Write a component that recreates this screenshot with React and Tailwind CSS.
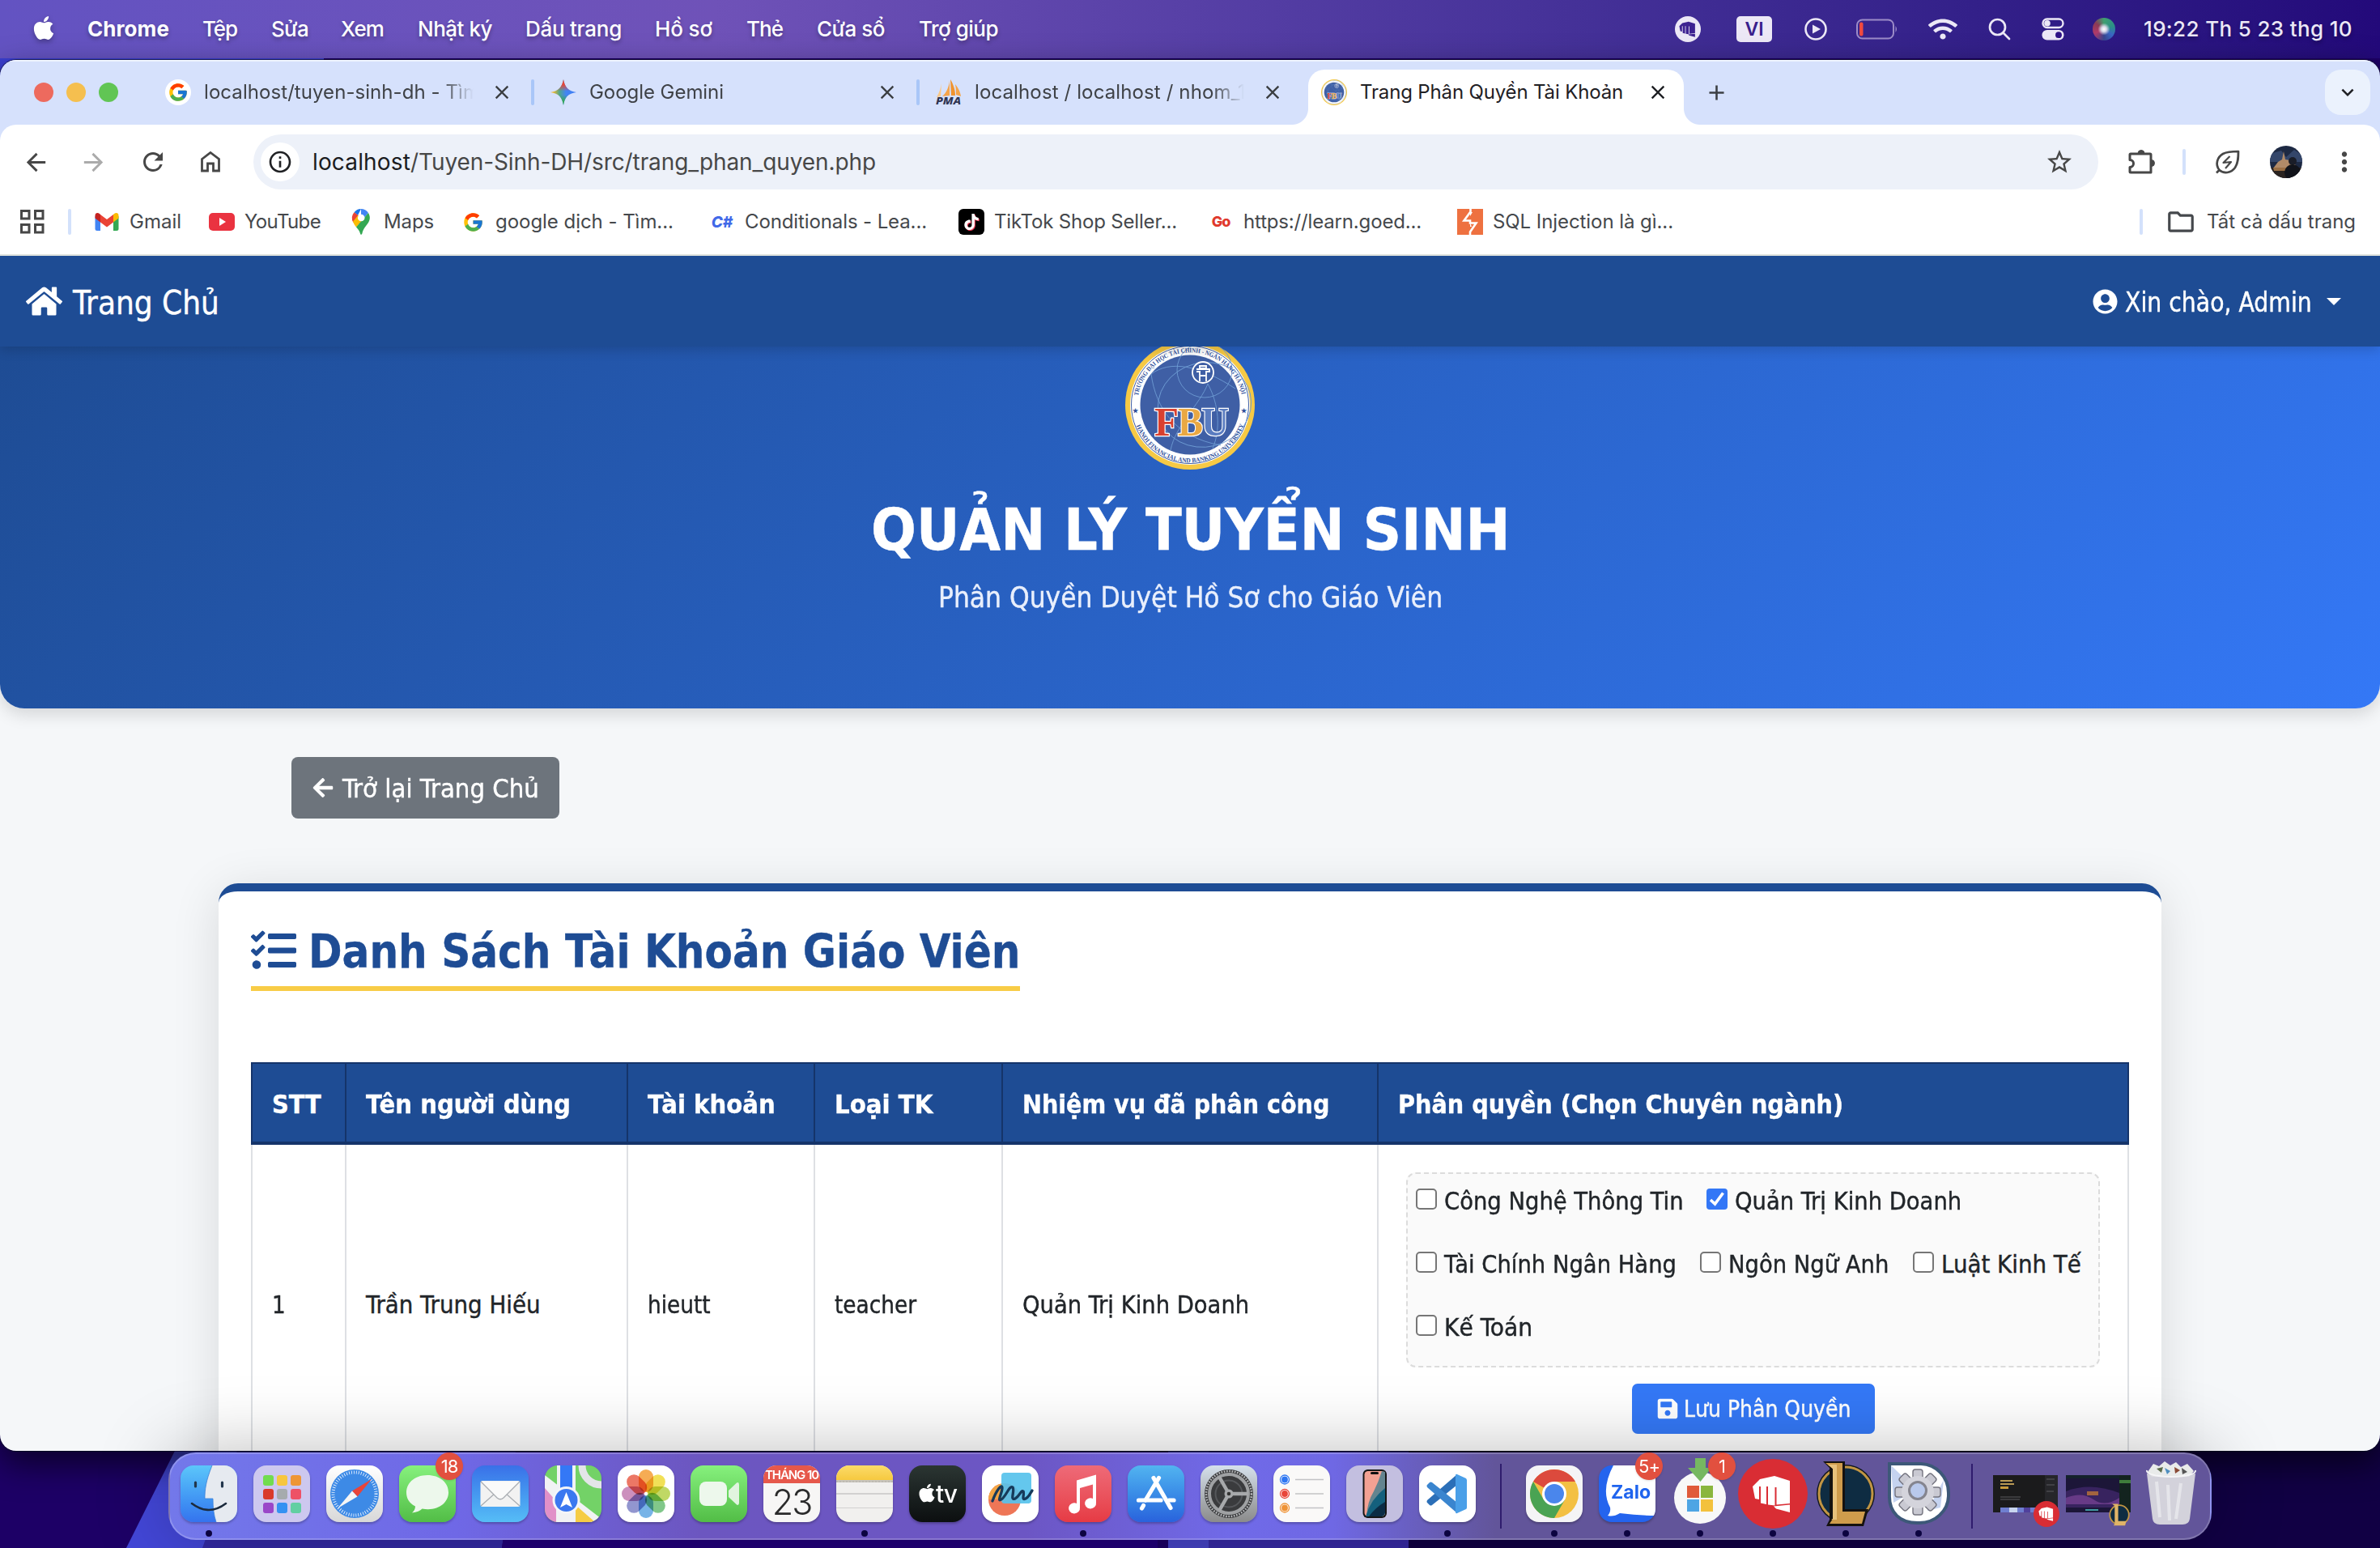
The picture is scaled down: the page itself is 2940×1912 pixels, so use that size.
import React, { useLayoutEffect, useRef } from "react";
import { FaApple, FaHome, FaUserCircle, FaArrowLeft, FaTasks, FaSave, FaWifi } from "react-icons/fa";
import { FcGoogle } from "react-icons/fc";
import { MdArrowBack, MdArrowForward, MdRefresh, MdInfoOutline, MdStarBorder, MdMoreVert, MdOutlineFolder, MdClose, MdAdd, MdKeyboardArrowDown } from "react-icons/md";
import { SiTiktok } from "react-icons/si";

const UI = "font-['Inter','Noto_Sans',sans-serif]";
const WEB = "font-['DejaVu_Sans_Condensed','DejaVu_Sans','Noto_Sans',sans-serif] [font-stretch:condensed]";

/* Single line of text whose tracking is adjusted so it spans exactly w pixels. */
function Fit({ w, children, className = "" }) {
  const ref = useRef(null);
  useLayoutEffect(() => {
    const el = ref.current;
    el.style.letterSpacing = "0px";
    const natural = el.getBoundingClientRect().width;
    el.style.letterSpacing = `${(w - natural) / children.length}px`;
  }, [w, children]);
  return (
    <span ref={ref} className={`inline-block shrink-0 whitespace-nowrap leading-none ${className}`}>
      {children}
    </span>
  );
}

/* Single line of text whose glyphs are widened or narrowed to span exactly w pixels. */
function Stretch({ w, children }) {
  const outer = useRef(null);
  const inner = useRef(null);
  useLayoutEffect(() => {
    outer.current.style.width = `${w}px`;
    inner.current.style.transform = `scaleX(${w / inner.current.offsetWidth})`;
  }, [w, children]);
  return (
    <span ref={outer} className="inline-flex shrink-0 leading-none">
      <span ref={inner} className="inline-block origin-left shrink-0 whitespace-nowrap leading-none [-webkit-text-stroke:0.4px]">{children}</span>
    </span>
  );
}

/* ---------- small drawings ---------- */

function Fist({ className }) {
  return (
    <svg viewBox="-26 -26 52 52" className={className} fill="currentColor">
      <path d="M-25 -9 L-16 -18 L2 -22 L21 -16 V12 L4.500 13.500 V-8 H2.500 V14.500 L-6 13.500 V-9 H-8 V13 L-15 11.500 V-9 H-17 V7 L-22 6 Z" />
      <path d="M1 15.500 L21 13.500 V23 L4 18.500 Z" />
    </svg>
  );
}

function FbuLogo({ className, detailed = false }) {
  return (
    <svg viewBox="0 0 160 160" className={className}>
      <circle cx="80" cy="80" r="80" fill="#f6c945" />
      <circle cx="80" cy="80" r="74" fill="#fff" />
      <circle cx="80" cy="80" r="72.5" fill="none" stroke="#3f5fa5" strokeWidth="1" />
      <circle cx="80" cy="80" r="61.5" fill="#3f5fa5" />
      <g fill="none" stroke="#6d9bd2" strokeWidth="0.9">
        <ellipse cx="98" cy="37" rx="34" ry="34" />
        <ellipse cx="98" cy="80" rx="58" ry="52" transform="rotate(-14 98 80)" />
        <path d="M32 42 C38 85 62 120 118 130" />
        <path d="M102 54 C92 80 62 105 56 136" />
        <path d="M102 54 C116 80 118 110 108 134" />
        <path d="M32 42 C55 25 90 30 136 60" />
      </g>
      <circle cx="96" cy="40" r="13" fill="#3f5fa5" stroke="#fff" strokeWidth="1.800" />
      <path d="M88 36 H104 V39 H100 V51 M92 51 V39 H88 M92 32 H100 V35 H92 Z M93 44 H99" fill="none" stroke="#fff" strokeWidth="1.800" />
      <g fontFamily="'Liberation Serif', serif" fontWeight="700" fontSize="51" stroke="#fff" strokeWidth="2.400" paintOrder="stroke">
        <text x="36" y="118" fill="#d8402f" textLength="30" lengthAdjust="spacingAndGlyphs">F</text>
        <text x="65" y="118" fill="#eaa843" textLength="31" lengthAdjust="spacingAndGlyphs">B</text>
        <text x="94" y="118" fill="#5a7cc0" textLength="34" lengthAdjust="spacingAndGlyphs">U</text>
      </g>
      {detailed && (
        <g fontFamily="'Liberation Serif', serif" fontWeight="700" fontSize="8" fill="#2f4f9a">
          <path id="fbu-top" d="M15.800 70 A65 65 0 0 1 144.200 70" fill="none" />
          <path id="fbu-bottom" d="M11.500 99 A71 71 0 0 0 148.500 99" fill="none" />
          <text textLength="180" lengthAdjust="spacingAndGlyphs"><textPath href="#fbu-top" startOffset="1">TRƯỜNG ĐẠI HỌC TÀI CHÍNH - NGÂN HÀNG HÀ NỘI</textPath></text>
          <text textLength="172" lengthAdjust="spacingAndGlyphs"><textPath href="#fbu-bottom" startOffset="7">HANOI FINANCIAL AND BANKING UNIVERSITY</textPath></text>
          <text x="9" y="90">★</text>
          <text x="143" y="90">★</text>
        </g>
      )}
    </svg>
  );
}

function GeminiIcon() {
  return (
    <svg viewBox="0 0 32 32" className="size-8">
      <defs>
        <linearGradient id="gem" x1="0" y1="0.5" x2="1" y2="0.5"><stop offset="0.1" stopColor="#f5b82a" /><stop offset="0.35" stopColor="#4fa58f" /><stop offset="0.6" stopColor="#4285f4" /><stop offset="1" stopColor="#3f7cf4" /></linearGradient>
        <linearGradient id="gem2" x1="0" y1="0" x2="0" y2="1"><stop offset="0" stopColor="#ea4335" /><stop offset="0.2" stopColor="#ea4335" /><stop offset="0.45" stopColor="#ea4335" stopOpacity="0" /><stop offset="0.6" stopColor="#34a853" stopOpacity="0" /><stop offset="0.85" stopColor="#34a853" /></linearGradient>
      </defs>
      <path d="M16 0 C17.500 9.500 22 14.500 32 16 C22 17.500 17.500 22 16 32 C14.500 22 10 17.500 0 16 C10 14.500 14.500 9.500 16 0Z" fill="url(#gem)" />
      <path d="M16 0 C17.500 9.500 22 14.500 32 16 C22 17.500 17.500 22 16 32 C14.500 22 10 17.500 0 16 C10 14.500 14.500 9.500 16 0Z" fill="url(#gem2)" />
    </svg>
  );
}

function PmaIcon() {
  return (
    <svg viewBox="0 0 32 32" className="size-8">
      <path d="M7 5 L6 21 L1 22 C4 17 6 11 7 5Z" fill="#f9c98a" />
      <path d="M17 0 C17 8 13 17 8 21 L17 20Z" fill="#f5a44a" />
      <path d="M18 0 L19 20 L24 20 C24 12 21 5 18 0Z" fill="#f0932f" />
      <path d="M24 6 C25 11 25 16 25 19 L31 21 C30 14 27 10 24 6Z" fill="#f5a44a" />
      <text x="0" y="31" fontFamily="'Noto Sans',sans-serif" fontStyle="italic" fontWeight="800" fontSize="11.500" fill="#2f3350" textLength="31" lengthAdjust="spacingAndGlyphs">PMA</text>
    </svg>
  );
}

function GmailIcon() {
  return (
    <svg viewBox="0 0 32 32" className="size-8">
      <path d="M1.500 9 V24.500 Q1.500 27 4 27 H8 V13Z" fill="#4285f4" />
      <path d="M24 13 V27 H28 Q30.500 27 30.500 24.500 V9Z" fill="#34a853" />
      <path d="M8 7 V16.500 L16 22.500 L24 16.500 V7 L16 13Z" fill="#ea4335" />
      <path d="M24 7 V16.500 L30.500 11.500 V8 C30.500 4.500 27 4.200 25 6Z" fill="#fbbc04" />
      <path d="M8 7 V16.500 L1.500 11.500 V8 C1.500 4.500 5 4.200 7 6Z" fill="#c5221f" />
    </svg>
  );
}

function YoutubeIcon() {
  return (
    <svg viewBox="0 0 32 32" className="size-8">
      <rect y="5" width="32" height="22" rx="5" fill="#ea3340" />
      <path d="M13 11 L21 16 L13 21Z" fill="#fff" />
    </svg>
  );
}

function MapsPin() {
  return (
    <svg viewBox="0 0 32 32" className="size-8">
      <path d="M16 0 A11 11 0 0 0 7.500 4.200 L12 8Z" fill="#1a73e8" />
      <path d="M7.500 4.200 A11 11 0 0 0 6.500 17 L12.500 8Z" fill="#ea4335" />
      <path d="M16 0 C19.500 0 23 1.500 25 5 L13 19 L7.500 18.500 L16 8Z" fill="#4285f4" />
      <path d="M6 15.500 L12.500 8 L18 14 L10 22.500 C8.500 20.500 7 18.500 6 15.500Z" fill="#fbbc04" />
      <path d="M25 5 C27.500 9 27.300 13.500 25 17 C21 22.500 18.500 25 17.500 30 C17 32 15.500 32.500 15 30.500 C14 26.500 12 25 10 22.500Z" fill="#34a853" />
      <circle cx="16.200" cy="11" r="4.300" fill="#fff" />
    </svg>
  );
}

function SqlIcon() {
  return (
    <svg viewBox="0 0 32 32" className="size-8">
      <rect width="32" height="32" fill="#ee7140" />
      <path d="M16.500 0 V3.500 L8.500 14.500 H16 V17.500 H23.500 L16 28.500 V32" fill="none" stroke="#fff" strokeWidth="2.600" />
      <path d="M16 4 L19 4 L16 9Z M16 17 V22 L18 22Z" fill="#fff" />
    </svg>
  );
}

function HomeOutline() {
  return (
    <svg viewBox="0 0 32 32" className="size-8" fill="none" stroke="#474747" strokeWidth="2.800">
      <path d="M5.500 12.500 L16 4.500 L26.500 12.500 V27 H19.500 V18 H12.500 V27 H5.500Z" />
    </svg>
  );
}

function ExtensionOutline() {
  return (
    <svg viewBox="0 0 36 36" className="size-9" fill="none" stroke="#474747" strokeWidth="3" strokeLinejoin="round">
      <path d="M5 8 H29 Q30 8 30 9 V31 H5 Q4 31 4 30 V24.500 C10 24.500 10 15.500 4 15.500 V9 Q4 8 5 8Z" />
      <path d="M14 7.500 A4 4 0 0 1 22 7.500Z M30.500 15.500 A4 4 0 0 1 30.500 23.500Z" fill="#474747" strokeWidth="1" />
    </svg>
  );
}

function LeafBolt() {
  return (
    <svg viewBox="0 0 32 32" className="size-8" fill="none" stroke="#474747" strokeWidth="2.700" strokeLinejoin="round">
      <path d="M5.500 26 C0 19 3 10 10 6 C16 3 23 3 29 3 C29 10 29 17 25 23 C20 30 11 31 5.500 26 L2 29.500" />
      <path d="M18.500 9 L10.500 17 L20 16 L13 24" strokeWidth="2.200" />
    </svg>
  );
}

function Avatar() {
  return (
    <svg viewBox="0 0 40 40" className="size-10">
      <clipPath id="av"><circle cx="20" cy="20" r="20" /></clipPath>
      <g clipPath="url(#av)">
        <rect width="40" height="40" fill="#1d2943" />
        <path d="M0 10 L14 6 L20 14 L30 5 L40 12 V20 H0Z" fill="#34466a" />
        <path d="M4 28 L10 20 L15 17 L17 7 L19 17 L25 18 L32 24 L33 30 L4 33Z" fill="#b08a68" />
        <rect x="0" y="27" width="40" height="13" fill="#2a2320" />
        <path d="M4 27 H26 V31 H5Z" fill="#9a6f45" />
        <circle cx="28" cy="19" r="5" fill="#1a1d28" />
        <circle cx="28" cy="33" r="10" fill="#11131a" />
      </g>
    </svg>
  );
}

/* ---------- menu bar ---------- */

const MENU = [
  ["Tệp", 43, "ml-[41px]"],
  ["Sửa", 46, "ml-[42px]"],
  ["Xem", 53, "ml-[40px]"],
  ["Nhật ký", 92, "ml-[42px]"],
  ["Dấu trang", 119, "ml-[41px]"],
  ["Hồ sơ", 71, "ml-[41px]"],
  ["Thẻ", 45, "ml-[42px]"],
  ["Cửa sổ", 84, "ml-[42px]"],
  ["Trợ giúp", 98, "ml-[42px]"],
];

function MenuBar() {
  return (
    <div className={`flex h-[72px] w-full items-center bg-linear-to-r from-[#6353c2] via-[#6f52b8] via-30% to-[#23097a] pl-[40px] pr-[34px] text-[26px] font-medium text-white [text-shadow:0_3px_5px_rgba(0,0,0,0.3)] ${UI}`}>
      <div className="flex w-full items-center">
        <FaApple className="mr-[40px] -mt-[3px] h-[33px] w-[28px] drop-shadow-[0_3px_3px_rgba(0,0,0,0.3)]" />
        <Fit w={101} className="font-bold">Chrome</Fit>
        {MENU.map(([t, w, m]) => (
          <div key={t} className={`flex ${m}`}><Fit w={w}>{t}</Fit></div>
        ))}
        <div className="ml-auto flex items-center text-[#ece8f6]">
          <div className="flex size-8 items-center justify-center rounded-full bg-[#ece8f6] text-[#3d2291]"><Fist className="size-[22px]" /></div>
          <div className="ml-[44px] flex h-8 w-[44px] items-center justify-center rounded-[5px] bg-[#ece8f6] text-[23px] font-semibold text-[#39208c] [text-shadow:none]">VI</div>
          <svg viewBox="0 0 28 28" className="ml-[40px] size-7"><circle cx="14" cy="14" r="12.500" fill="none" stroke="currentColor" strokeWidth="2.600" /><path d="M10 8.500 L20 14 L10 19.500Z" fill="currentColor" /></svg>
          <svg viewBox="0 0 52 26" className="ml-[36px] h-[26px] w-[52px]"><rect x="1" y="1.500" width="45" height="23" rx="6.500" fill="none" stroke="#9c8cc8" strokeWidth="2" /><rect x="4" y="4.500" width="4.500" height="17" rx="2" fill="#f0493f" /><path d="M48.500 9 Q51.500 13 48.500 17Z" fill="#9c8cc8" /></svg>
          <FaWifi className="ml-[37px] h-[30px] w-[36px]" />
          <svg viewBox="0 0 28 28" className="ml-[38px] size-7" fill="none" stroke="currentColor" strokeWidth="2.700" strokeLinecap="round"><circle cx="11.500" cy="11.500" r="9.500" /><path d="M18.500 18.500 L26 26" /></svg>
          <svg viewBox="0 0 28 28" className="ml-[38px] size-7"><rect x="1.500" y="1.500" width="25" height="10.500" rx="5.200" fill="none" stroke="currentColor" strokeWidth="2.400" /><circle cx="7" cy="6.700" r="3.800" fill="currentColor" /><rect x="0.500" y="15" width="27" height="12.500" rx="6.200" fill="currentColor" /><circle cx="21" cy="21.200" r="3.900" fill="#2f1286" /></svg>
          <div className="ml-[35px] size-7 rounded-full bg-[radial-gradient(circle_at_50%_50%,#ffffff_0%,#d7d9e8_16%,transparent_38%),conic-gradient(from_0deg,#3fa071,#2b8f87_20%,#3a66c4_35%,#38468f_50%,#b03a6a_68%,#8a3a55_85%,#3fa071)]" />
          <div className="ml-[35px] flex"><Fit w={258}>19:22 Th 5 23 thg 10</Fit></div>
        </div>
      </div>
    </div>
  );
}

/* ---------- browser chrome ---------- */

function Tab({ icon, text, w, sep = true }) {
  return (
    <div className="flex h-full w-[476px] shrink-0 items-center">
      <div className="flex size-8 shrink-0 items-center justify-center">{icon}</div>
      <div className="ml-4 flex h-10 w-[333px] shrink-0 items-center overflow-hidden [mask-image:linear-gradient(to_right,black_88%,transparent)]">
        <Fit w={w} className="text-[#3f4247]">{text}</Fit>
      </div>
      <MdClose className="ml-[21px] size-[28px] shrink-0 text-[#3c3f43]" />
      {sep && <div className="ml-[22px] h-8 w-[4px] rounded-full bg-[#a9c6f8]" />}
    </div>
  );
}

function TabStrip() {
  return (
    <div className={`flex h-[80px] w-full items-center bg-[#d6e1fc] text-[24px] shadow-[inset_0_2px_0_#eef3fe] ${UI}`}>
      <div className="flex w-[204px] shrink-0 items-center gap-4 pl-[42px]">
        <div className="size-6 rounded-full bg-[#ed6a5e]" />
        <div className="size-6 rounded-full bg-[#f5bf4f]" />
        <div className="size-6 rounded-full bg-[#61c554]" />
      </div>
      <Tab icon={<div className="flex size-8 items-center justify-center rounded-full bg-white"><FcGoogle className="size-[26px]" /></div>} text="localhost/tuyen-sinh-dh - Tìm" w={341} />
      <Tab icon={<GeminiIcon />} text="Google Gemini" w={166} />
      <Tab icon={<PmaIcon />} text="localhost / localhost / nhom_1" w={335} sep={false} />
      <div className="relative -ml-[16px] mt-auto flex h-[68px] w-[464px] shrink-0 items-center rounded-t-[20px] bg-white pb-[12px]">
        <div className="absolute -left-[20px] bottom-0 size-[20px] bg-[radial-gradient(circle_at_0_0,transparent_19.500px,white_20.500px)]" />
        <div className="absolute -right-[20px] bottom-0 size-[20px] bg-[radial-gradient(circle_at_100%_0,transparent_19.500px,white_20.500px)]" />
        <FbuLogo className="ml-4 size-8" />
        <div className="ml-4 flex"><Fit w={325} className="text-[#1f2024]">Trang Phân Quyền Tài Khoản</Fit></div>
        <MdClose className="ml-[29px] size-[28px] text-[#1f2024]" />
      </div>
      <MdAdd className="ml-[25px] size-[31px] text-[#3c3f43]" />
      <div className="ml-auto mr-[12px] flex size-[56px] items-center justify-center rounded-[20px] bg-[#ebf2fd]"><MdKeyboardArrowDown className="size-[30px] text-[#1f2024]" /></div>
    </div>
  );
}

function Toolbar() {
  return (
    <div className="w-full bg-[#d6e1fc]">
      <div className={`flex h-[92px] w-full items-center rounded-t-[20px] bg-white text-[#474747] ${UI}`}>
        <MdArrowBack className="ml-[27px] size-[35px]" />
        <MdArrowForward className="ml-[36px] size-[35px] text-[#ababab]" />
        <MdRefresh className="ml-[38px] size-[36px]" />
        <div className="ml-[37px]"><HomeOutline /></div>
        <div className="ml-[37px] flex h-[68px] w-[2279px] items-center rounded-full bg-[#edf1f9]">
          <div className="ml-[9px] flex size-12 items-center justify-center rounded-full bg-white"><MdInfoOutline className="size-[32px] text-[#202124]" /></div>
          <div className="ml-[16px] flex text-[28px]"><Fit w={121} className="text-[#1b1c1f]">localhost</Fit><Fit w={575}>/Tuyen-Sinh-DH/src/trang_phan_quyen.php</Fit></div>
          <MdStarBorder className="ml-auto mr-[30px] size-[36px]" />
        </div>
        <div className="ml-[35px]"><ExtensionOutline /></div>
        <div className="ml-[33px] h-8 w-[4px] rounded-full bg-[#d3e1fb]" />
        <div className="ml-[36px]"><LeafBolt /></div>
        <div className="ml-[36px]"><Avatar /></div>
        <MdMoreVert className="ml-[33px] size-[38px]" />
      </div>
    </div>
  );
}

function Bookmark({ icon, text, w, box }) {
  return (
    <div className={`flex shrink-0 items-center gap-3 ${box}`}>
      <div className="flex size-8 items-center justify-center">{icon}</div>
      <Fit w={w}>{text}</Fit>
    </div>
  );
}

function BookmarksBar() {
  return (
    <div className={`flex h-[70px] w-full items-center border-b-2 border-[#dfe2dd] bg-white pb-[12px] text-[24px] text-[#45484c] ${UI}`}>
      <svg viewBox="0 0 30 30" className="ml-[25px] size-[30px]" fill="none" stroke="#474747" strokeWidth="3"><rect x="1.500" y="1.500" width="9.500" height="9.500" /><rect x="18.500" y="1.500" width="9.500" height="9.500" /><rect x="1.500" y="18.500" width="9.500" height="9.500" /><rect x="18.500" y="18.500" width="9.500" height="9.500" /></svg>
      <div className="ml-[29px] mr-[28px] h-8 w-[4px] rounded-full bg-[#d3e1fb]" />
      <Bookmark box="w-[142px]" icon={<GmailIcon />} text="Gmail" w={64} />
      <Bookmark box="w-[172px]" icon={<YoutubeIcon />} text="YouTube" w={94} />
      <Bookmark box="w-[138px]" icon={<MapsPin />} text="Maps" w={62} />
      <Bookmark box="w-[308px]" icon={<FcGoogle className="size-[27px]" />} text="google dịch - Tìm..." w={220} />
      <Bookmark box="w-[308px]" icon={<span className="text-[19px] font-extrabold italic leading-none text-[#4169e8]">C#</span>} text="Conditionals - Lea..." w={225} />
      <Bookmark box="w-[308px]" icon={<div className="flex size-8 items-center justify-center rounded-[6px] bg-black"><SiTiktok className="size-[20px] text-white drop-shadow-[1px_1px_0_#ee3a56]" /></div>} text="TikTok Shop Seller..." w={226} />
      <Bookmark box="w-[308px]" icon={<span className="text-[18px] font-extrabold leading-none tracking-[-1px] text-[#e0392c]">Go</span>} text="https://learn.goed..." w={220} />
      <Bookmark box="w-[308px]" icon={<SqlIcon />} text="SQL Injection là gì..." w={223} />
      <div className="ml-auto h-8 w-[4px] rounded-full bg-[#d3e1fb]" />
      <MdOutlineFolder className="ml-[28px] size-[38px]" />
      <div className="ml-[13px] mr-[30px] flex"><Fit w={184}>Tất cả dấu trang</Fit></div>
    </div>
  );
}

/* ---------- web page ---------- */

function NavBar() {
  return (
    <nav className="relative z-10 flex h-[112px] w-full items-center justify-between bg-[#1e4c94] pl-8 pr-[48px] text-white shadow-[0_4px_14px_rgba(0,0,0,0.16)]">
      <div className="flex items-center text-[40px]">
        <FaHome className="h-[40px] w-[45px]" />
        <div className="ml-[13px] mt-[3px] flex"><Stretch w={181}>Trang Chủ</Stretch></div>
      </div>
      <div className="flex items-center text-[33px]">
        <FaUserCircle className="size-[31px]" />
        <div className="ml-[9px] mt-[2px] flex"><Stretch w={231}>Xin chào, Admin</Stretch></div>
        <div className="ml-[18px] border-x-[9px] border-t-[9px] border-x-transparent border-t-white" />
      </div>
    </nav>
  );
}

function Hero() {
  return (
    <header className="flex h-[447px] w-full flex-col items-center rounded-b-[30px] bg-[linear-gradient(135deg,#1e4c94,#3478f6)] shadow-[0_8px_20px_rgba(0,0,0,0.13)]">
      <FbuLogo detailed className="-mt-2 size-[160px] shrink-0" />
      <h1 className="mt-[40px] flex text-[70.400px] font-bold text-white"><Stretch w={789}>QUẢN LÝ TUYỂN SINH</Stretch></h1>
      <p className="mt-[30px] flex text-[35.200px] text-[#e9effc]"><Stretch w={623}>Phân Quyền Duyệt Hồ Sơ cho Giáo Viên</Stretch></p>
    </header>
  );
}

function Check({ label, w, checked = false, gap = "" }) {
  return (
    <label className={`flex h-[78px] items-start ${gap}`}>
      {checked ? (
        <svg viewBox="0 0 26 26" className="size-[26px]"><rect width="26" height="26" rx="4" fill="#3377f6" /><path d="M5 14 L10.500 19 L20.500 5.500" fill="none" stroke="#fff" strokeWidth="3.600" /></svg>
      ) : (
        <span className="size-[26px] rounded-[5px] border-2 border-[#767676] bg-white" />
      )}
      <span className="ml-[9px] flex text-[30.800px]"><Stretch w={w}>{label}</Stretch></span>
    </label>
  );
}

const HEAD = [
  ["STT", 61],
  ["Tên người dùng", 253],
  ["Tài khoản", 158],
  ["Loại TK", 121],
  ["Nhiệm vụ đã phân công", 379],
  ["Phân quyền (Chọn Chuyên ngành)", 550],
];
const ROW = [
  ["1", 17],
  ["Trần Trung Hiếu", 216],
  ["hieutt", 78],
  ["teacher", 101],
  ["Quản Trị Kinh Doanh", 280],
];
const COLS = "grid grid-cols-[116px_348px_231px_232px_464px_929px]";

function TeacherTable() {
  return (
    <div className="mt-[88px] w-[2320px]">
      <div className={`${COLS} h-[102px] border-b-4 border-t-2 border-[#15346a] bg-[#1e4c94] text-[32px] font-bold text-white`}>
        {HEAD.map(([t, w]) => (
          <div key={t} className="flex items-center border-l-2 border-[#15346a] pl-6 pt-[3px] last:border-r-2"><Stretch w={w}>{t}</Stretch></div>
        ))}
      </div>
      <div className={`${COLS} h-[392px] bg-white text-[30.800px] text-[#212529]`}>
        {ROW.map(([t, w]) => (
          <div key={t} className="flex items-center border-l-2 border-[#dee0e4] pl-6 pt-[3px]"><Stretch w={w}>{t}</Stretch></div>
        ))}
        <div className="flex flex-col items-center border-x-2 border-[#dee0e4] pt-[34px]">
          <div className="h-[241px] w-[857px] rounded-[12px] border-2 border-dashed border-[#dcdcdc] bg-[#fafafa] pl-[10px] pt-[18px]">
            <div className="flex">
              <Check label="Công Nghệ Thông Tin" w={296} />
              <Check label="Quản Trị Kinh Doanh" w={280} checked gap="ml-[28px]" />
            </div>
            <div className="flex">
              <Check label="Tài Chính Ngân Hàng" w={287} />
              <Check label="Ngôn Ngữ Anh" w={198} gap="ml-[29px]" />
              <Check label="Luật Kinh Tế" w={173} gap="ml-[30px]" />
            </div>
            <div className="flex"><Check label="Kế Toán" w={109} /></div>
          </div>
          <button className="mt-[20px] flex h-[62px] w-[300px] items-center justify-center rounded-[7px] bg-[#3478f6] text-[28.500px] text-white">
            <FaSave className="size-[28px]" />
            <div className="ml-[6px] mt-[2px] flex"><Stretch w={206}>Lưu Phân Quyền</Stretch></div>
          </button>
        </div>
      </div>
    </div>
  );
}

function WebPage() {
  return (
    <div className={`h-[1476px] w-full overflow-hidden bg-[#f5f7f9] ${WEB}`}>
      <NavBar />
      <Hero />
      <button className="ml-[360px] mt-[60px] flex h-[76px] w-[331px] items-center rounded-[8px] bg-[#6d747c] pl-[25px] text-[32px] text-white">
        <FaArrowLeft className="size-[28px]" />
        <div className="ml-[10px] mt-px flex"><Stretch w={243}>Trở lại Trang Chủ</Stretch></div>
      </button>
      <section className="mx-auto mt-[80px] flex h-[900px] w-[2400px] flex-col items-start rounded-[24px] border-t-[10px] border-[#1e4c94] bg-white pl-10 pt-[44px] shadow-[0_10px_60px_rgba(0,0,0,0.12)]">
        <h2 className="flex h-[79px] items-start border-b-[6px] border-[#f8cc46] text-[57.600px] font-bold text-[#1e4c94]">
          <FaTasks className="mt-[1px] size-[56px]" />
          <span className="ml-[15px] mt-[2px] flex"><Stretch w={879}>Danh Sách Tài Khoản Giáo Viên</Stretch></span>
        </h2>
        <TeacherTable />
      </section>
    </div>
  );
}

/* ---------- dock ---------- */

function Tile({ bg = "", children }) {
  return <div className={`flex size-[70px] items-center justify-center overflow-hidden rounded-[16px] shadow-[0_2px_3px_rgba(0,0,0,0.25)] ${bg}`}>{children}</div>;
}

function Svg({ children, box = "0 0 70 70" }) {
  return <svg viewBox={box} className="size-full">{children}</svg>;
}

function Badge({ children }) {
  return <div className={`absolute -right-[9px] top-[7px] flex h-[34px] w-[34px] items-center justify-center rounded-full bg-[#e2503f] text-[22px] tracking-[-1px] text-white shadow ${UI}`}>{children}</div>;
}

const Finder = () => (
  <Tile bg="bg-linear-to-b from-[#5cc6fa] to-[#3573ee]">
    <Svg>
      <path d="M39 0 C31 20 30 30 30 41 H40 C40 52 41 61 44 70 H70 V0Z" fill="#e6eaf0" />
      <path d="M39 0 C31 20 30 30 30 41 H40 C40 52 41 61 44 70" fill="none" stroke="#3a82d8" strokeWidth="0.800" />
      <path d="M18.500 21 V26 M51.500 21 V26" stroke="#22364c" strokeWidth="3.200" strokeLinecap="round" />
      <path d="M14 47 Q35 63 56 47" fill="none" stroke="#1c2b3d" strokeWidth="2.600" strokeLinecap="round" />
    </Svg>
  </Tile>
);

const PAD = ["#71dc4f", "#f7c63f", "#ee9636", "#d93a2b", "#a6abae", "#ee5166", "#9a46c9", "#3591f2", "#62cfa2"];
const Launchpad = () => (
  <Tile bg="bg-[#cdc8ef]">
    <div className="grid grid-cols-3 gap-[4px]">
      {PAD.map((c) => <div key={c} className="size-[13px] rounded-[3px]" style={{ backgroundColor: c }} />)}
    </div>
  </Tile>
);

const Safari = () => (
  <Tile bg="bg-linear-to-b from-white to-[#d8d8d8]">
    <Svg>
      <circle cx="35" cy="35" r="30" fill="#3d8ae6" />
      <circle cx="35" cy="35" r="26.500" fill="none" stroke="#e8f2ff" strokeWidth="4" strokeDasharray="0.900 2.100" />
      <path d="M56 17 L38.500 38.500 L32 31.500Z" fill="#e8443a" />
      <path d="M14 53 L32 31.500 L38.500 38.500Z" fill="#f5f5f5" />
    </Svg>
  </Tile>
);

const Messages = () => (
  <Tile bg="bg-linear-to-b from-[#86f17d] to-[#52bd46]">
    <Svg><path d="M35 12 C20 12 9 21 9 33.500 C9 41 13 47 20 50.500 C20 54 18 57 16 58.500 C22 58 26 56 28.500 53.500 C48 57 61 46 61 33.500 C61 21 50 12 35 12Z" fill="#edf8ec" /></Svg>
  </Tile>
);

const Mail = () => (
  <Tile bg="bg-linear-to-b from-[#3a70e8] to-[#56bdf6]">
    <Svg>
      <rect x="10.500" y="19" width="49" height="32" rx="2.500" fill="#f2f2f2" />
      <path d="M11 50 L29 34 M59 50 L41 34" stroke="#a9adb2" strokeWidth="1.300" />
      <path d="M11 20 L31 40 Q35 43.500 39 40 L59 20" fill="#fafafa" stroke="#a9adb2" strokeWidth="1.300" />
    </Svg>
  </Tile>
);

const MapsApp = () => (
  <Tile bg="bg-[#73d267]">
    <Svg>
      <path d="M0 12 L70 66 V70 H14 L0 40Z" fill="#f1f2f4" />
      <path d="M0 28 L14 44 V70 H0Z" fill="#e190c8" />
      <path d="M38 70 V49 L62 70Z" fill="#f6cc44" />
      <path d="M46 0 A24 24 0 0 0 70 24" fill="none" stroke="#e3e5e8" strokeWidth="9" />
      <path d="M15 0 V40 H38 V0Z" fill="#f1f2f4" /><path d="M19 0 V40 H34 V0Z" fill="#3478f6" />
      <circle cx="26.500" cy="43" r="17" fill="#f4f5f8" /><circle cx="26.500" cy="43" r="14" fill="#3b78f0" />
      <path d="M26.500 33 L34 52 L26.500 48 L19 52Z" fill="#fff" />
    </Svg>
  </Tile>
);

const PETALS = [["#f5a13c", 0], ["#f0dc3f", 45], ["#b7d34f", 90], ["#6fc07a", 135], ["#64a9e4", 180], ["#8388c9", 225], ["#c57fb4", 270], ["#ea6450", 315]];
const Photos = () => (
  <Tile bg="bg-white">
    <Svg>
      {PETALS.map(([c, a]) => <rect key={a} x="26" y="5" width="18" height="28" rx="9" fill={c} opacity="0.880" transform={`rotate(${a} 35 35)`} className="mix-blend-multiply" />)}
    </Svg>
  </Tile>
);

const FaceTime = () => (
  <Tile bg="bg-linear-to-b from-[#86f17d] to-[#52bd46]">
    <Svg><rect x="11" y="20" width="34" height="30" rx="8" fill="#edf8ec" /><path d="M47 31 L57 21.500 Q60 20 60 24 V46 Q60 50 57 48.500 L47 39Z" fill="#e1f4df" /></Svg>
  </Tile>
);

const Calendar = () => (
  <Tile bg="bg-[#f7f6f5]">
    <div className={`flex size-full flex-col items-center ${UI}`}>
      <div className="flex h-[22px] w-full items-center justify-center bg-[#e6584b] text-white"><Fit w={66} className="text-[15px] font-semibold">THÁNG 10</Fit></div>
      <div className="mt-[2px] text-[43px] font-light leading-none tracking-[-2px] text-[#2b2b2b]">23</div>
    </div>
  </Tile>
);

const Notes = () => (
  <Tile bg="bg-[#f1f0ee]">
    <div className="flex size-full flex-col">
      <div className="h-[18px] bg-linear-to-b from-[#fbdb68] to-[#f6c93e]" />
      <div className="h-[3px] border-b-2 border-dotted border-[#bdbab2] bg-[#c9c5bb]" />
      <div className="mt-[13px] h-[1.500px] bg-[#d2d1d0]" />
      <div className="mt-[16px] h-[1.500px] bg-[#d2d1d0]" />
    </div>
  </Tile>
);

const Tv = () => (
  <Tile bg="bg-linear-to-b from-[#2b3633] to-[#0c0f10]">
    <div className={`flex items-center text-[30px] font-medium leading-none tracking-[-1px] text-white ${UI}`}><FaApple className="-mt-[2px] h-[26px] w-[22px]" />tv</div>
  </Tile>
);

const Freeform = () => (
  <Tile bg="bg-white">
    <Svg>
      <circle cx="28" cy="42" r="20" fill="#ee7657" /><path d="M8 42 A20 20 0 0 1 28 22 V42Z" fill="#f2a444" />
      <rect x="24" y="9" width="37" height="38" rx="4" fill="#57c2ec" opacity="0.920" />
      <path d="M13 44 C18 30 25 22 25 28 C25 34 18 46 24 42 C30 38 34 24 38 27 C41 31 34 44 41 41 C47 38 48 30 51 32 C53 35 48 44 54 41 C58 39 60 34 62 31" fill="none" stroke="#163a5a" strokeWidth="3.300" strokeLinecap="round" />
    </Svg>
  </Tile>
);

const Music = () => (
  <Tile bg="bg-linear-to-b from-[#ee6a78] to-[#e63a44]">
    <Svg><path d="M27 18.500 L51 11.500 V46 A7 6.500 0 1 1 47 41 V23.500 L31 28 V52 A7 6.500 0 1 1 27 47Z" fill="#fff" /></Svg>
  </Tile>
);

const AppStore = () => (
  <Tile bg="bg-linear-to-b from-[#52b4f0] to-[#2a62dc]">
    <Svg><g stroke="#fff" strokeWidth="5.200" strokeLinecap="round"><path d="M32 15.500 L53 52.500" /><path d="M38.500 15.500 L22 43" /><path d="M13.500 43 H41 M51 43 H57" /><path d="M19.500 49.500 L17.500 53" /></g></Svg>
  </Tile>
);

const Settings = () => (
  <Tile bg="bg-linear-to-b from-[#d5e1ec] to-[#8b8b8b]">
    <Svg>
      <circle cx="35" cy="35" r="30" fill="#3a3b3d" />
      <circle cx="35" cy="35" r="28" fill="none" stroke="#b7b9bb" strokeWidth="2.500" strokeDasharray="1.700 1.600" />
      <circle cx="35" cy="35" r="24" fill="none" stroke="#9fa1a3" strokeWidth="4" />
      <circle cx="35" cy="35" r="16.500" fill="none" stroke="#55575a" strokeWidth="2" />
      <path d="M35 35 L59 35 M35 35 L23 14 M35 35 L23 56" stroke="#a7a9ab" strokeWidth="4.500" />
      <circle cx="35" cy="35" r="5.500" fill="#a7a9ab" /><circle cx="35" cy="35" r="2.300" fill="#333" />
    </Svg>
  </Tile>
);

const Reminders = () => (
  <Tile bg="bg-[#faf9f8]">
    <Svg>
      {[["#2f77f2", 17.500], ["#e8463a", 35], ["#ee9336", 52.500]].map(([c, y]) => (
        <g key={y}><circle cx="14" cy={y} r="5.500" fill="#fff" stroke={c} strokeWidth="1.300" /><circle cx="14" cy={y} r="3.900" fill={c} /><path d={`M27 ${y} H62`} stroke="#c3c3c5" strokeWidth="1.500" /></g>
      ))}
    </Svg>
  </Tile>
);

const Mirroring = () => (
  <Tile bg="bg-[#c3bfe0]">
    <Svg>
      <rect x="20.500" y="5" width="29.500" height="60" rx="6" fill="#161616" />
      <rect x="22.500" y="7" width="25.500" height="56" rx="4.500" fill="#f3a193" />
      <path d="M48 8 V60 Q46 63 43 63 H25 Q26 45 34 32 Q40 20 44 7Z" fill="#64848f" />
      <path d="M48 28 V58 Q47 63 43 63 H24 Q30 42 48 28Z" fill="#14607d" />
      <path d="M48 45 V58 Q47 63 43 63 H28 Q36 52 48 45Z" fill="#0b2c45" />
      <rect x="30" y="8" width="10" height="3" rx="1.500" fill="#111" />
    </Svg>
  </Tile>
);

const VsCode = () => (
  <Tile bg="bg-white">
    <Svg>
      <path d="M47 11 L10 43 Q9 45 10 46 L13 49 Q14.500 50 16 49 L47 24Z" fill="#2b6fb8" />
      <path d="M47 59 L10 27 Q9 25 10 24 L13 21 Q14.500 20 16 21 L47 46Z" fill="#3a85cf" />
      <path d="M47 11 L58 16 Q59 17 59 18.500 V52 Q59 53.500 58 54 L47 59 Q45.500 60 45 58 V12 Q45.500 10 47 11Z" fill="#4a9fe8" />
    </Svg>
  </Tile>
);

const ChromeApp = () => (
  <Tile bg="bg-[#f4f4f6]">
    <Svg>
      <circle cx="35" cy="35" r="30" fill="#f3c043" />
      <path d="M35 35 L9 20 A30 30 0 0 1 61 20 H35Z" fill="#dc4a3d" />
      <path d="M9 20 A30 30 0 0 0 35 65 L48 42.500 L22 42.500Z" fill="#4aa353" />
      <circle cx="35" cy="35" r="15" fill="#fff" /><circle cx="35" cy="35" r="12" fill="#4a86ec" />
    </Svg>
  </Tile>
);

const Zalo = () => (
  <Tile bg="bg-[#2464ee]">
    <Svg>
      <path d="M18 0 H70 V62 Q50 62 26 59 Q18 64 11 62 Q15 58 14 52 Q2 30 18 0Z" fill="#fff" />
      <text x="15" y="41" fontFamily="Inter, sans-serif" fontWeight="700" fontSize="23" fill="#1f64ee" textLength="49" lengthAdjust="spacingAndGlyphs">Zalo</text>
    </Svg>
  </Tile>
);

const Installer = () => (
  <svg viewBox="0 0 70 86" className="-mt-1 h-[86px] w-[70px] overflow-visible">
    <circle cx="35" cy="50" r="32" fill="#f8f8f8" />
    <path d="M19 35 H34 V50 H19Z" fill="#e05a3a" /><path d="M36 35 H51 V50 H36Z" fill="#8ab63d" />
    <path d="M19 52 H34 V67 H19Z" fill="#4ea5e4" /><path d="M36 52 H51 V67 H36Z" fill="#f3c13c" />
    <path d="M29 1 H42 V13 H49 L35.500 30 L20 13 H29Z" fill="#76b861" />
  </svg>
);

const RedFist = () => <div className="flex size-[86px] shrink-0 items-center justify-center rounded-full bg-[#d92d34] text-white"><Fist className="size-[52px]" /></div>;

const League = () => (
  <svg viewBox="0 0 76 84" className="h-[84px] w-[76px] shrink-0">
    <circle cx="38" cy="42" r="36" fill="#10161f" />
    <circle cx="38" cy="42" r="33" fill="#0e2c42" stroke="#c19543" strokeWidth="3" />
    <path d="M10 2 H37 V61 H66 L60 82 H14 L18 74 V10Z" fill="#15120f" />
    <path d="M13 4 H34 V64 H62 L58 79 H18 L22 73 V11Z" fill="#cf9c4c" />
    <path d="M16 6 H27 V74 H20 L22 73 V11Z" fill="#e8c27c" />
  </svg>
);

const GEAR_TEETH = [0, 45, 90, 135, 180, 225, 270, 315];
const Gear = () => (
  <svg viewBox="0 0 78 78" className="size-[78px] shrink-0">
    <path d="M3 2 H42 A35 36 0 0 1 76 38 V42 A36 34 0 0 1 40 75 C16 76 2 62 3 40Z" fill="#fff" stroke="#3d5878" strokeWidth="4" />
    <path d="M5 4 L36 34 L8 50Z M70 22 L50 60 L66 56Z" fill="#c5d3f0" />
    <g fill="#c9c9d2" stroke="#74747f" strokeWidth="1.400">
      {GEAR_TEETH.map((a) => <rect key={a} x="32" y="9" width="12" height="20" rx="3" transform={`rotate(${a} 38 37)`} />)}
    </g>
    <circle cx="38" cy="37" r="20" fill="#d4d4dc" /><circle cx="38" cy="35" r="10.500" fill="#b9c9ec" stroke="#85858f" strokeWidth="3" />
  </svg>
);

const ThumbClient = () => (
  <div className="relative h-[46px] w-[80px] shrink-0">
    <Svg box="0 0 80 46">
      <rect width="80" height="46" fill="#1b1b1c" /><path d="M64 0 H80 V38 H64Z" fill="#26262a" />
      <path d="M9 6 H24 V8 H9Z M9 10 H26 V12 H9Z" fill="#b99a55" />
      <path d="M9 14 H19 V17 H9Z" fill="#c79a3c" /><path d="M9 27 H34 M9 30 H33 M66 5 H76 M66 12 H76 M66 20 H75" stroke="#5a5a5e" />
      <path d="M9 40 H54 V46 H9Z" fill="#6f7fd0" /><path d="M20 40 H30 V46 H20Z" fill="#c8d5ee" /><path d="M38 40 H46 V46 H38Z" fill="#50409c" />
    </Svg>
    <div className="absolute -bottom-[18px] -right-[2px] flex size-[32px] items-center justify-center rounded-full bg-[#d92d34] text-white"><Fist className="size-[20px]" /></div>
  </div>
);

const ThumbGame = () => (
  <div className="relative h-[46px] w-[80px] shrink-0">
    <Svg box="0 0 80 46">
      <rect width="80" height="46" fill="#1c1638" /><path d="M0 20 Q30 8 66 22 V40 H0Z" fill="#38235f" />
      <path d="M0 28 Q20 20 34 30 T66 28 V36 H0Z" fill="#673a86" /><path d="M26 20 H40 V25 H26Z" fill="#a2643f" />
      <path d="M66 0 H80 V46 H66Z" fill="#13231f" /><path d="M66 6 H80 V10 H66Z" fill="#3f7d3c" /><path d="M0 0 H66 V4 H0Z" fill="#14222c" />
      <path d="M24 43 H40" stroke="#3f9ba0" strokeWidth="2" />
    </Svg>
    <svg viewBox="0 0 76 84" className="absolute -bottom-[18px] right-0 h-[30px] w-[28px]"><circle cx="38" cy="42" r="33" fill="#0e2c42" stroke="#c19543" strokeWidth="5" /><path d="M13 4 H34 V64 H62 L58 79 H18 L22 73 V11Z" fill="#e0b468" /></svg>
  </div>
);

const Trash = () => (
  <svg viewBox="0 0 64 80" className="-mt-[2px] h-[80px] w-[64px] shrink-0">
    <path d="M3 14 L10 4 L17 7 L24 1 L31 6 L38 2 L44 8 L52 4 L60 13 L54 20 H8Z" fill="#e9ebea" />
    <path d="M14 10 L22 8 L20 15Z" fill="#5b6a4a" /><path d="M36 8 L43 12 L37 16Z" fill="#8a4a36" /><path d="M24 9 L31 13 L27 17Z" fill="#4f8fc0" /><path d="M45 9 L52 14 L46 17Z" fill="#555" />
    <path d="M2 16 Q32 22 62 16 L55 72 Q54 79 46 79 H18 Q10 79 9 72Z" fill="#dcdbe0" fillOpacity="0.930" />
    <path d="M2 12 Q1 19 32 20 Q63 19 62 12" fill="none" stroke="#f6f6f8" strokeWidth="2" />
    <path d="M14 26 L18 70 M44 28 L38 72 M28 30 L30 74" stroke="#eeeef1" strokeWidth="4" opacity="0.700" />
  </svg>
);

const DOCK_LEFT = [
  [Finder, true], [Launchpad], [Safari], [Messages, false, "18"], [Mail], [MapsApp], [Photos], [FaceTime], [Calendar],
  [Notes, true], [Tv], [Freeform], [Music, true], [AppStore], [Settings], [Reminders], [Mirroring], [VsCode, true],
];
const DOCK_MID = [[ChromeApp, true], [Zalo, true, "5+"], [Installer, true, "1"], [RedFist, true], [League, true], [Gear, true]];
const DOCK_RIGHT = [[ThumbClient], [ThumbGame], [Trash]];

function DockGroup({ items }) {
  return items.map(([Icon, running, badge], i) => (
    <div key={i} className="relative mx-[10px] flex h-full w-[70px] shrink-0 items-center justify-center pb-[6px]">
      <div className="flex shrink-0"><Icon /></div>
      {badge && <div className="absolute inset-0 -top-[9px]"><Badge>{badge}</Badge></div>}
      {running && <div className="absolute bottom-[2px] size-[8px] rounded-full bg-[#0c0440]" />}
    </div>
  ));
}

function Dock() {
  return (
    <div className="relative z-20 mt-[2px] flex h-[108px] w-[2524px] items-center self-center rounded-[34px] border-2 border-white/20 bg-[linear-gradient(to_right,#7378ea_0%,#6f68e6_14%,#6c56c0_26%,#6c56c4_42%,#706ae8_52%,#6f68e4_57%,#62559a_65%,#62559a_100%)] pl-[3px] shadow-[0_0_90px_rgba(0,0,0,0.27)]">
      <DockGroup items={DOCK_LEFT} />
      <div className="mx-[20px] h-[80px] w-[2px] bg-[#2f1d6d]" />
      <DockGroup items={DOCK_MID} />
      <div className="mx-[20px] h-[80px] w-[2px] bg-[#2f1d6d]" />
      <DockGroup items={DOCK_RIGHT} />
    </div>
  );
}

function Wallpaper() {
  return (
    <svg viewBox="0 0 2940 1912" className="absolute inset-0 size-full" preserveAspectRatio="none">
      <rect width="2940" height="1912" fill="#1d0066" />
      <rect width="400" height="400" fill="#3b3fd0" />
      <path d="M156 1912 L240 1772 H640 L620 1912Z" fill="#342aa6" />
      <path d="M156 1912 L226 1772 H300 L250 1912Z" fill="#4347d8" />
      <path d="M620 1912 L640 1772 H1430 V1912Z" fill="#22007a" />
      <rect x="1443" y="1780" width="50" height="132" fill="#4644c8" />
      <rect x="1493" y="1780" width="247" height="132" fill="#372aa6" />
      <rect x="1740" y="1780" width="1200" height="132" fill="#110044" />
    </svg>
  );
}

export default function App() {
  return (
    <div className="relative flex h-[1912px] w-[2940px] flex-col overflow-hidden">
      <Wallpaper />
      <div className="relative flex flex-1 flex-col">
        <MenuBar />
        <div className="mt-[2px] flex h-[1718px] w-full flex-col overflow-hidden rounded-[20px] shadow-[0_0_0_1px_rgba(0,0,20,0.6),0_16px_40px_rgba(0,0,0,0.6)]">
          <TabStrip />
          <Toolbar />
          <BookmarksBar />
          <WebPage />
        </div>
        <Dock />
      </div>
    </div>
  );
}
